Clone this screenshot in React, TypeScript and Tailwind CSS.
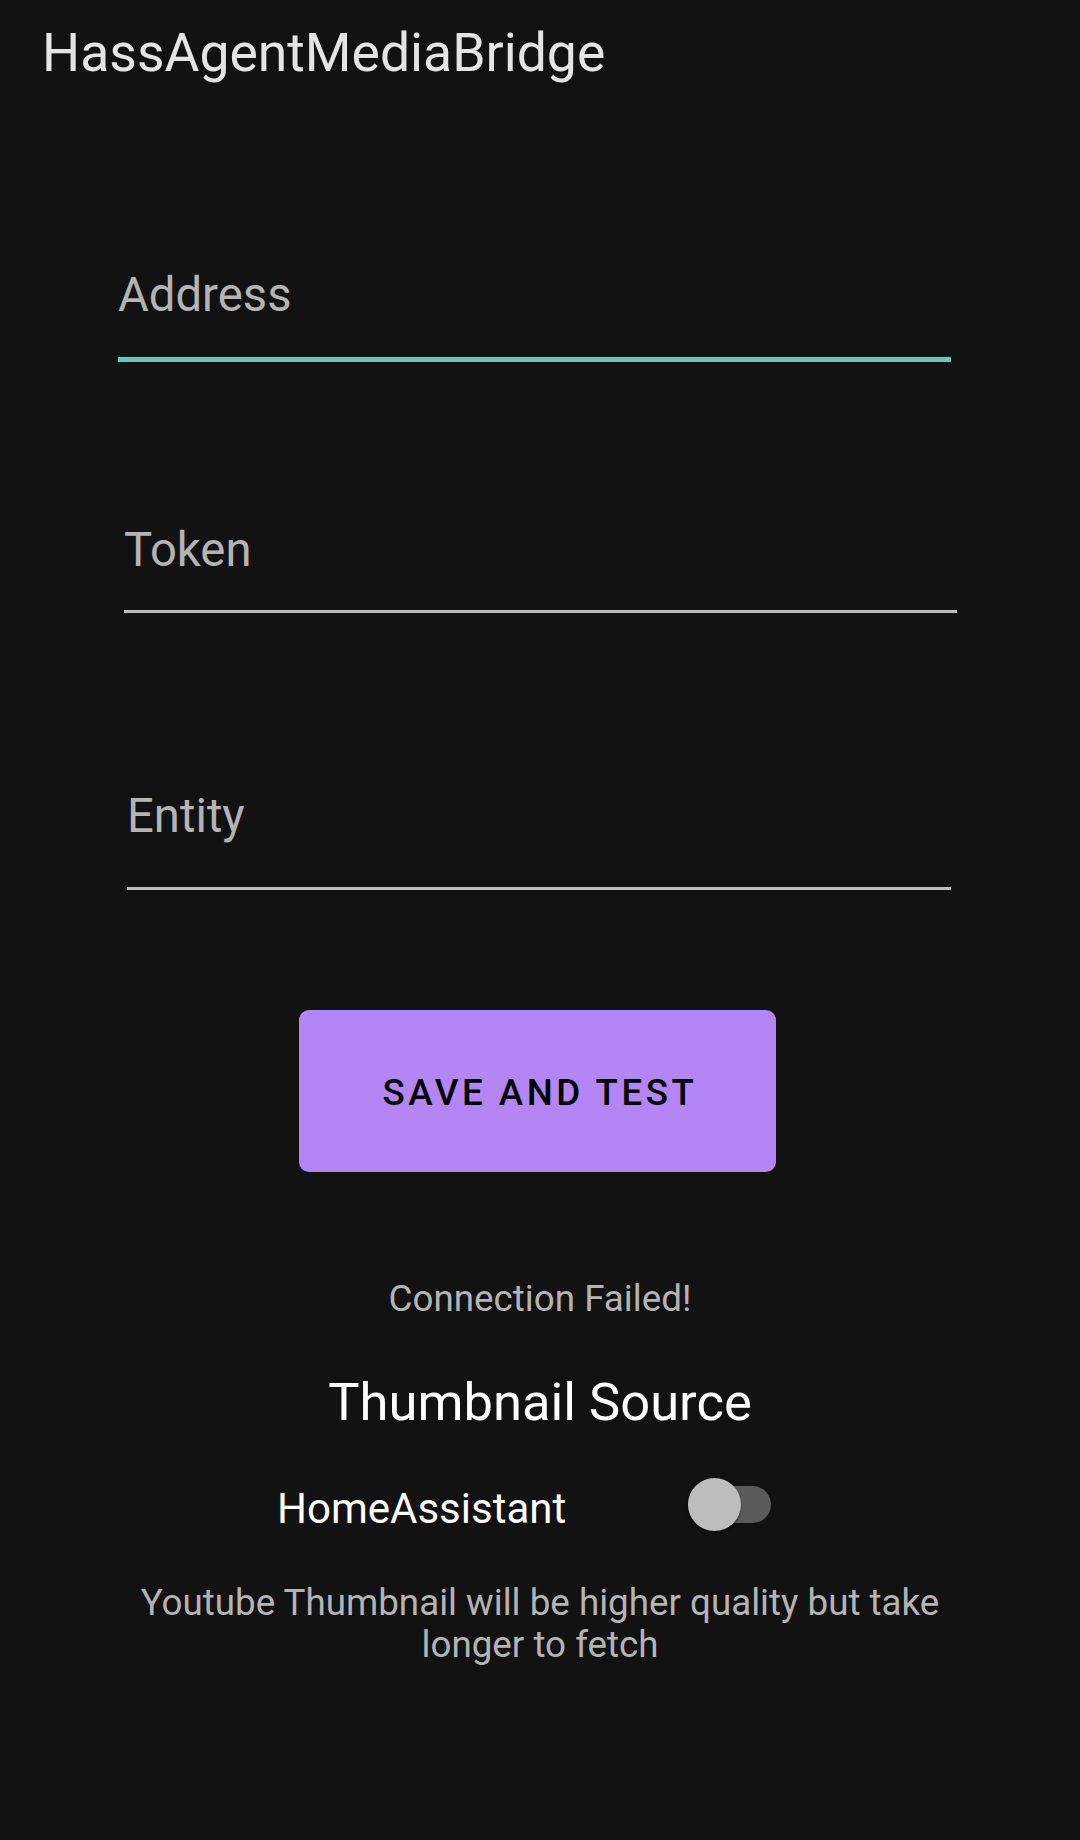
const fields = [
  { label: "Address", box: "mt-[183px] ml-[118px] w-[833px] pb-[34px] border-b-[5px] border-[#5ccdb7]" },
  { label: "Token", box: "mt-[160px] ml-[124px] w-[833px] pb-[32px] border-b-[3px] border-[#bdbdbd]" },
  { label: "Entity", box: "mt-[175px] ml-[127px] w-[824px] pb-[43px] border-b-[3px] border-[#bdbdbd]" },
];

export default function App() {
  return (
    <div className="min-h-[1840px] bg-[#121212] font-['Roboto','Liberation_Sans',sans-serif]">
      {/* Toolbar */}
      <div className="pt-[22px] pl-[42px] text-[53.5px] leading-[62px] text-[#e4e4e4]">
        HassAgentMediaBridge
      </div>

      {/* Inputs */}
      {fields.map((field) => (
        <div key={field.label} className={field.box}>
          <div className="text-[47.25px] leading-[56px] text-[#b4b4b4]">{field.label}</div>
        </div>
      ))}

      {/* Button */}
      <button className="mt-[120px] ml-[299px] flex h-[162px] w-[477px] items-center justify-center rounded-[10px] bg-[#b386f3] pt-[4px] pl-[5px] text-[36.75px] font-medium tracking-[3.5px] text-black">
        SAVE AND TEST
      </button>

      {/* Status */}
      <div className="mt-[105px] text-center text-[36.75px] leading-[43px] text-[#b4b4b4]">
        Connection Failed!
      </div>

      <div className="mt-[51px] text-center text-[52.5px] leading-[62px] text-white">Thumbnail Source</div>

      {/* Switch row */}
      <div className="mt-[45px] ml-[277px] flex items-start">
        <div className="mt-[6px] w-[411px] text-[42px] leading-[49px] text-white">HomeAssistant</div>
        <div className="relative mt-[8px] h-[37px] w-[83px] rounded-full bg-[#5b5b5b]">
          <div className="absolute -top-[8px] left-0 h-[53px] w-[53px] rounded-full bg-[#bdbdbd] shadow-[0_1px_3px_rgba(0,0,0,0.5)]" />
        </div>
      </div>

      <p className="mx-auto mt-[49px] max-w-[860px] text-center text-[36.75px] leading-[42px] text-[#b4b4b4]">
        Youtube Thumbnail will be higher quality but take longer to fetch
      </p>
    </div>
  );
}
